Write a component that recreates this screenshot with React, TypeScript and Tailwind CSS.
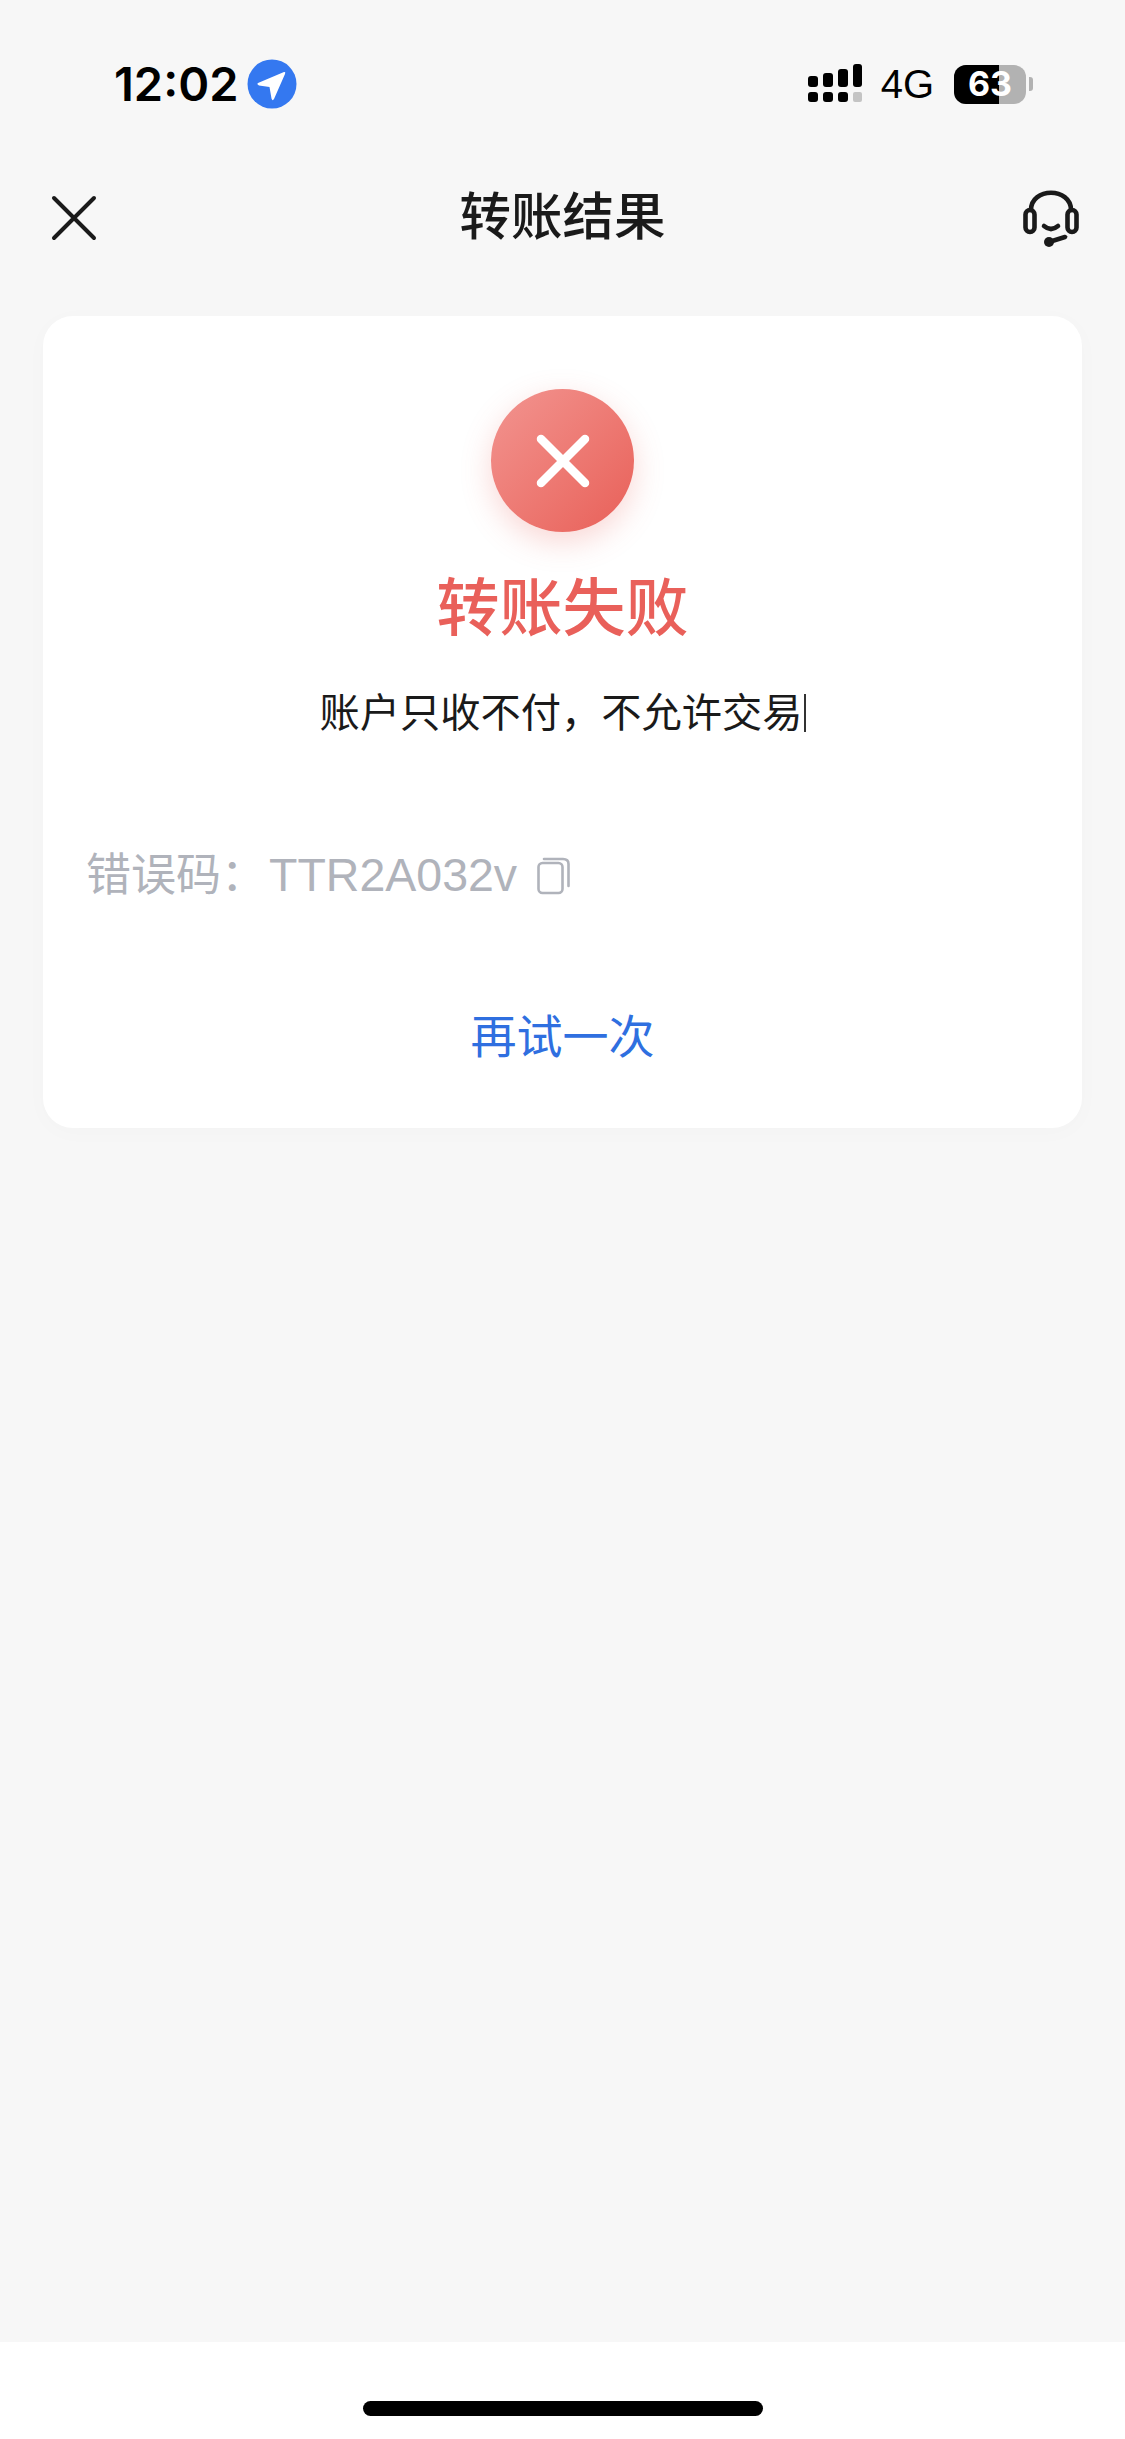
export default function App() {
  const font = { fontFamily: 'Inter, "Noto Sans CJK SC", sans-serif' };
  return (
    <div style={font} className="flex h-[2439px] w-[1125px] flex-col overflow-hidden bg-[#f7f7f7]">
      {/* status bar */}
      <div className="flex h-[166px] shrink-0 items-start justify-between pl-[114px] pr-[92px] pt-[59px]">
        <div className="flex items-center gap-[9px]">
          <span className="text-[47px] font-semibold leading-[48px] text-black">12:02</span>
          <svg width="50" height="50" viewBox="0 0 50 50">
            <circle cx="25" cy="25" r="24.5" fill="#3478f0" />
            <path d="M11 24 L37 13 Q39 12.5 38 15 L27 40 Q25.5 42.5 24.5 39.5 L22.5 28 L12 26.5 Q9.5 25 11 24Z" fill="#fff" />
          </svg>
        </div>
        <div className="flex items-center pt-[5px]">
          <svg width="56" height="40" viewBox="0 0 56 40" className="mr-[18px]">
            <rect x="1" y="12" width="10" height="11" rx="3" fill="#000" />
            <rect x="16" y="9" width="10" height="14" rx="3" fill="#000" />
            <rect x="31" y="5" width="10" height="18" rx="3" fill="#000" />
            <rect x="46" y="0" width="9" height="23" rx="3" fill="#000" />
            <rect x="1" y="28" width="10" height="10" rx="3" fill="#000" />
            <rect x="16" y="28" width="10" height="10" rx="3" fill="#000" />
            <rect x="31" y="28" width="10" height="10" rx="3" fill="#000" />
            <rect x="46" y="28" width="9" height="10" rx="2" fill="#c4c4c4" />
          </svg>
          <span className="mr-[20px] text-[40px] font-normal leading-[40px] text-black" style={{ fontFamily: '"Liberation Sans", sans-serif' }}>4G</span>
          <div className="relative flex h-[39px] w-[72px] overflow-hidden rounded-[12px] bg-[#b2b2b2]">
            <div className="h-full w-[45px] bg-black" />
            <span className="absolute inset-0 flex items-center justify-center text-[34px] font-bold leading-none text-white">63</span>
          </div>
          <div className="ml-[3px] h-[14px] w-[4px] rounded-r-[3px] bg-[#b2b2b2]" />
        </div>
      </div>
      {/* nav */}
      <div className="relative flex h-[100px] shrink-0 items-center justify-center">
        <svg width="46" height="46" viewBox="0 0 46 46" className="absolute left-[51px] top-[29px]">
          <path d="M3 3 L43 43 M43 3 L3 43" stroke="#1a1a1a" strokeWidth="4" strokeLinecap="round" />
        </svg>
        <span className="text-[51.5px] font-medium leading-[60px] text-[#1a1a1a]">转账结果</span>
        <svg width="56" height="58" viewBox="0 0 56 58" className="absolute left-[1023px] top-[24px]">
          <g fill="none" stroke="#1a1a1a" strokeWidth="4.6" strokeLinecap="round">
            <path d="M8 20 C8 -3 48 -3 48 20" />
            <rect x="2.5" y="20" width="9" height="22" rx="4.5" />
            <rect x="44.5" y="20" width="9" height="22" rx="4.5" />
            <path d="M21 36 Q28 42 35 36" />
            <path d="M26 52 L42 47" />
          </g>
          <circle cx="26" cy="52" r="5" fill="#1a1a1a" />
        </svg>
      </div>
      {/* card */}
      <div className="mx-[43px] mt-[50px] flex h-[812px] shrink-0 flex-col rounded-[30px] bg-white shadow-[0_4px_24px_rgba(0,0,0,0.02)]">
        <div className="flex flex-col items-center pt-[73px]">
          <div className="flex h-[143px] w-[143px] items-center justify-center rounded-full bg-gradient-to-br from-[#f29490] to-[#e85f58] shadow-[0_10px_30px_rgba(232,95,88,0.25)]">
            <svg width="54" height="54" viewBox="0 0 54 54">
              <path d="M5 5 L49 49 M49 5 L5 49" stroke="#fff" strokeWidth="8.5" strokeLinecap="round" />
            </svg>
          </div>
          <div className="mt-[37px] text-[63px] font-medium leading-[76px] text-[#e9605a]">转账失败</div>
          <div className="mt-[40px] flex items-center text-[40.25px] font-normal leading-[56px] text-[#1a1a1a]">
            <span>账户只收不付，不允许交易</span>
            <span className="ml-[1px] h-[38px] w-[2px] bg-[#333]" />
          </div>
        </div>
        <div className="mt-[103px] flex items-center pl-[43px] text-[#b0b3bb]">
          <span className="text-[45px] font-normal leading-[62px]">错误码：</span>
          <span className="ml-[3px] text-[46.5px] font-normal leading-[62px]" style={{ fontFamily: '"Liberation Sans", sans-serif' }}>TTR2A032v</span>
          <svg width="33" height="38" viewBox="0 0 33 38" className="ml-[20px] mt-[2px]">
            <g fill="none" stroke="#b0b3bb" strokeWidth="2.6">
              <rect x="1.5" y="6" width="24" height="30" rx="4" />
              <path d="M7 2 H26 Q31.5 2 31.5 7 V29" strokeLinecap="round" />
            </g>
          </svg>
        </div>
        <div className="mt-[100px] text-center text-[46px] font-normal leading-[60px] text-[#2f6fe0]">再试一次</div>
      </div>
      <div className="flex-1" />
      {/* home indicator */}
      <div className="flex h-[97px] shrink-0 justify-center bg-white pt-[59px]">
        <div className="h-[15px] w-[400px] rounded-full bg-black" />
      </div>
    </div>
  );
}
